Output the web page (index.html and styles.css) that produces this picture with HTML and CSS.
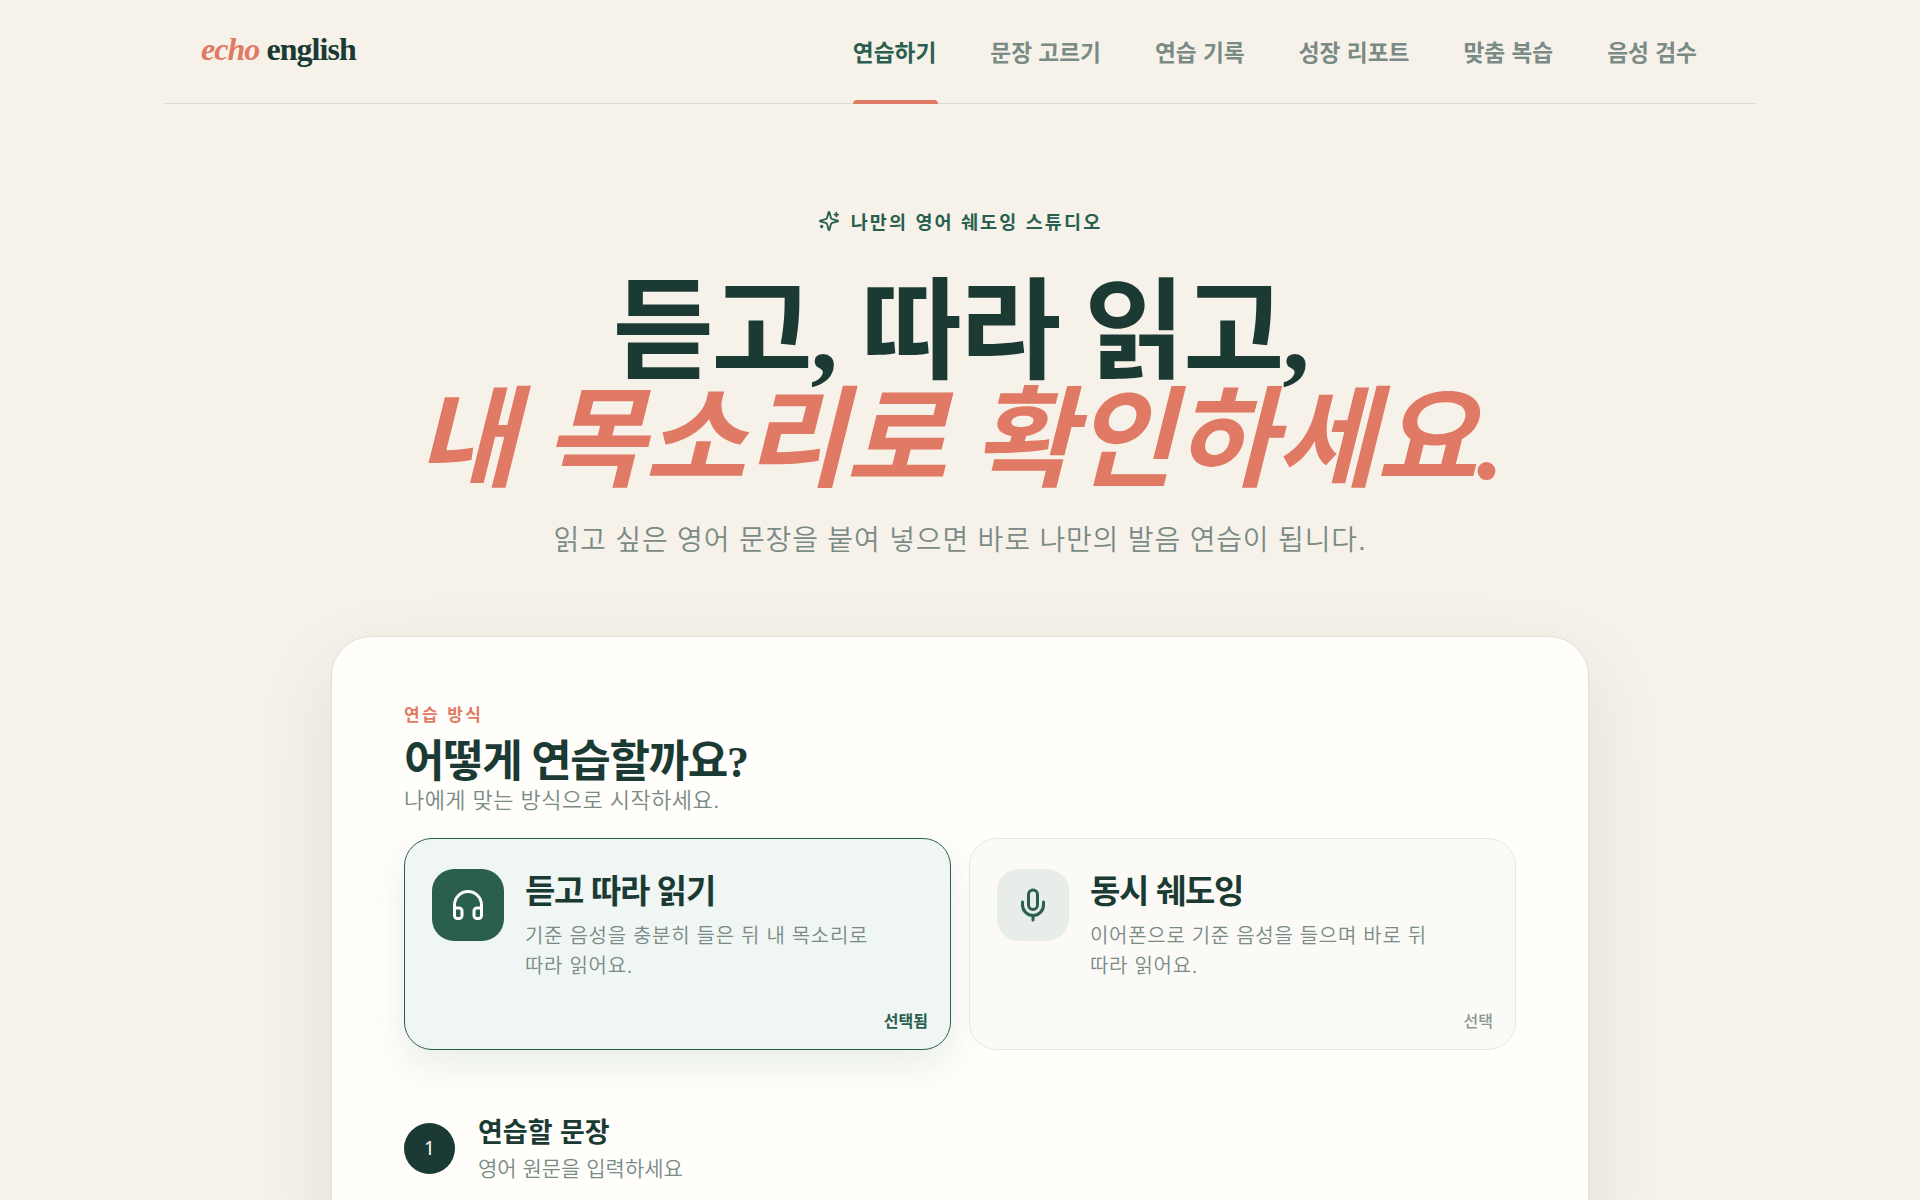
FILE: index.html
```html
<!DOCTYPE html>
<html lang="ko">
<head>
<meta charset="utf-8">
<title>echo english</title>
<link rel="stylesheet" href="styles.css">
</head>
<body>
<header class="topbar">
  <div class="logo"><em>echo</em> english</div>
  <nav class="nav">
    <a class="nav-item active">연습하기</a>
    <a class="nav-item">문장 고르기</a>
    <a class="nav-item">연습 기록</a>
    <a class="nav-item">성장 리포트</a>
    <a class="nav-item">맞춤 복습</a>
    <a class="nav-item">음성 검수</a>
  </nav>
</header>
<main>
  <section class="hero">
    <p class="eyebrow">
      <svg class="spark" viewBox="0 0 24 24" fill="none" stroke="currentColor" stroke-width="2" stroke-linecap="round" stroke-linejoin="round"><path d="M9.94 15.5A2 2 0 0 0 8.5 14.06l-6.14-1.58a.5.5 0 0 1 0-.96L8.5 9.94A2 2 0 0 0 9.94 8.5l1.58-6.14a.5.5 0 0 1 .96 0L14.06 8.5A2 2 0 0 0 15.5 9.94l6.14 1.58a.5.5 0 0 1 0 .96L15.5 14.06a2 2 0 0 0-1.44 1.44l-1.58 6.14a.5.5 0 0 1-.96 0z"/><path d="M20 3v4M22 5h-4M4 17v2M5 18H3"/></svg>
      <span>나만의 영어 쉐도잉 스튜디오</span>
    </p>
    <h1 class="title">듣고, 따라 읽고,<br><em>내 목소리로 확인하세요.</em></h1>
    <p class="lead">읽고 싶은 영어 문장을 붙여 넣으면 바로 나만의 발음 연습이 됩니다.</p>
  </section>
  <section class="panel">
    <p class="kicker">연습 방식</p>
    <h2 class="panel-title">어떻게 연습할까요?</h2>
    <p class="panel-sub">나에게 맞는 방식으로 시작하세요.</p>
    <div class="modes">
      <article class="mode selected">
        <div class="mode-top">
          <span class="mode-icon">
            <svg viewBox="0 0 24 24" fill="none" stroke="currentColor" stroke-width="2" stroke-linecap="round" stroke-linejoin="round"><path d="M3 14h3a2 2 0 0 1 2 2v3a2 2 0 0 1-2 2H5a2 2 0 0 1-2-2v-7a9 9 0 0 1 18 0v7a2 2 0 0 1-2 2h-1a2 2 0 0 1-2-2v-3a2 2 0 0 1 2-2h3"/></svg>
          </span>
          <div class="mode-text">
            <h3>듣고 따라 읽기</h3>
            <p>기준 음성을 충분히 들은 뒤 내 목소리로 따라 읽어요.</p>
          </div>
        </div>
        <span class="mode-state">선택됨</span>
      </article>
      <article class="mode">
        <div class="mode-top">
          <span class="mode-icon">
            <svg viewBox="0 0 24 24" fill="none" stroke="currentColor" stroke-width="2" stroke-linecap="round" stroke-linejoin="round"><path d="M12 2a3 3 0 0 0-3 3v7a3 3 0 0 0 6 0V5a3 3 0 0 0-3-3Z"/><path d="M19 10v2a7 7 0 0 1-14 0v-2"/><path d="M12 19v3"/></svg>
          </span>
          <div class="mode-text">
            <h3>동시 쉐도잉</h3>
            <p>이어폰으로 기준 음성을 들으며 바로 뒤 따라 읽어요.</p>
          </div>
        </div>
        <span class="mode-state">선택</span>
      </article>
    </div>
    <div class="step">
      <span class="step-num">1</span>
      <div class="step-text">
        <h3 class="step-title">연습할 문장</h3>
        <p class="step-sub">영어 원문을 입력하세요</p>
      </div>
    </div>
  </section>
</main>
</body>
</html>
```
FILE: styles.css
```css
* { box-sizing: border-box; }
html, body { margin: 0; padding: 0; }
body {
  background: #f6f2ea;
  color: #1b3a34;
  font-family: "Liberation Sans", "Noto Sans CJK KR", sans-serif;
  height: 1200px;
  overflow: hidden;
}
h1, h2, h3, p { margin: 0; }

.topbar {
  width: 1590px;
  height: 104px;
  margin: 0 auto;
  padding: 0 58px 0 36px;
  display: flex;
  align-items: center;
  justify-content: space-between;
  border-bottom: 1px solid #dcd8d0;
}
.logo {
  font-family: "Liberation Serif", serif;
  font-size: 32px;
  font-weight: 700;
  letter-spacing: -0.03em;
  color: #1b3a34;
  margin-top: -4px;
}
.logo em { color: #e07a65; font-weight: 700; }
.nav { display: flex; gap: 54px; height: 100%; }
.nav-item {
  position: relative;
  display: flex;
  align-items: center;
  font-size: 22.7px;
  font-weight: 600;
  color: #7a8a85;
  padding-bottom: 1px;
}
.nav-item.active { color: #2a5f50; font-weight: 700; }
.nav-item.active::after {
  content: "";
  position: absolute;
  left: 0;
  right: -2px;
  bottom: -1px;
  height: 4px;
  background: #e07a65;
  border-radius: 4px 4px 0 0;
}

.hero { text-align: center; padding-top: 103px; }
.eyebrow {
  display: flex;
  justify-content: center;
  align-items: center;
  gap: 11px;
  font-size: 18.5px;
  font-weight: 700;
  letter-spacing: 0.115em;
  color: #2a5f50;
  height: 28px;
}
.spark { width: 22px; height: 22px; }
.title {
  font-family: "Liberation Serif", "Noto Sans CJK KR", serif;
  font-size: 110px;
  line-height: 108px;
  font-weight: 700;
  letter-spacing: -0.02em;
  color: #1b3a34;
  margin-top: 44px;
}
.title em { color: #e07a65; font-weight: 700; letter-spacing: -0.005em; }
.lead {
  font-size: 28px;
  font-weight: 350;
  letter-spacing: 0.03em;
  color: #7a8a85;
  margin-top: 28px;
  line-height: 36px;
}

.panel {
  width: 1258px;
  margin: 77px auto 0;
  padding: 69px 72px 72px;
  background: #fffefa;
  border: 1px solid #e2dfd6;
  border-radius: 40px;
  box-shadow: 0 30px 80px rgba(60, 60, 30, 0.1);
}
.kicker {
  font-size: 17px;
  font-weight: 700;
  letter-spacing: 0.14em;
  color: #e07a65;
  line-height: 20px;
}
.panel-title {
  font-family: "Liberation Serif", "Noto Sans CJK KR", serif;
  font-size: 44px;
  font-weight: 700;
  letter-spacing: -0.03em;
  line-height: 49px;
  margin-top: 12px;
}
.panel-sub {
  font-size: 22px;
  letter-spacing: 0.02em;
  color: #7a8a85;
  line-height: 28px;
  font-weight: 350;
}
.modes {
  display: grid;
  grid-template-columns: 1fr 1fr;
  gap: 18px;
  margin-top: 23px;
}
.mode {
  height: 212px;
  padding: 30px 22px 17px 27px;
  border: 1px solid #e8e6e0;
  border-radius: 28px;
  background: #fbfaf6;
  display: flex;
  flex-direction: column;
  justify-content: space-between;
}
.mode.selected {
  border: 1.5px solid #2a5f50;
  background: #f0f6f3;
  box-shadow: 0 16px 36px rgba(42, 95, 80, 0.1);
}
.mode-top { display: flex; gap: 21px; }
.mode-icon {
  flex: none;
  width: 72px;
  height: 72px;
  border-radius: 22px;
  background: #e8edea;
  color: #2a5f50;
  display: flex;
  align-items: center;
  justify-content: center;
}
.selected .mode-icon { background: #2a5f50; color: #fffefa; }
.mode-icon svg { width: 36px; height: 36px; }
.mode-text { padding-top: 4px; }
.mode-text h3 {
  font-size: 33px;
  font-weight: 700;
  letter-spacing: -0.04em;
  line-height: 38px;
  color: #1b3a34;
}
.mode-text p {
  font-size: 20px;
  letter-spacing: 0.035em;
  line-height: 30px;
  color: #7a8a85;
  font-weight: 350;
  margin-top: 10px;
  max-width: 360px;
}
.mode-state {
  align-self: flex-end;
  font-size: 16px;
  font-weight: 500;
  color: #8a9792;
}
.selected .mode-state { color: #2a5f50; font-weight: 700; }

.step { display: flex; align-items: center; gap: 23px; margin-top: 62px; }
.step-num {
  flex: none;
  width: 51px;
  height: 51px;
  border-radius: 50%;
  background: #1b3a34;
  color: #fffefa;
  font-family: "Noto Sans", sans-serif;
  font-size: 19px;
  display: flex;
  align-items: center;
  justify-content: center;
}
.step-text { padding-top: 4px; }
.step-title { font-size: 27px; font-weight: 700; line-height: 34px; }
.step-sub { font-size: 21px; color: #7a8a85; line-height: 30px; margin-top: 4px; font-weight: 350; }
```
